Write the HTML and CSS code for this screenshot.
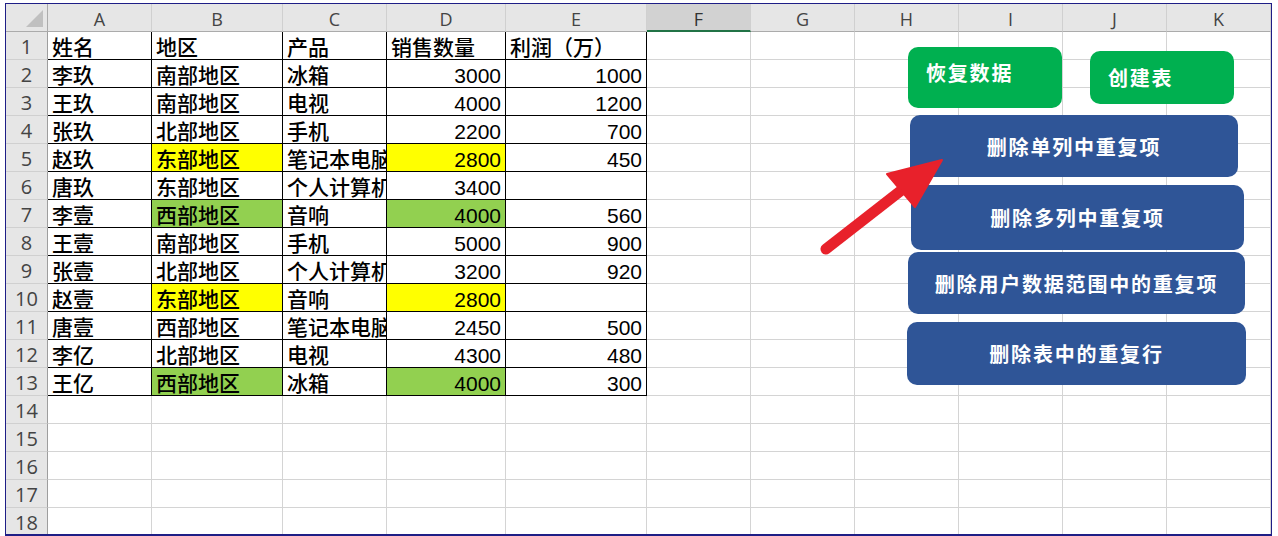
FILE: index.html
```html
<!DOCTYPE html>
<html lang="zh-CN">
<head>
<meta charset="utf-8">
<title>删除重复项</title>
<link rel="stylesheet" href="styles.css">
</head>
<body>
<div class="sheet">
  <div class="grid">
    <div class="corner"><span class="tri"></span></div>
    <div class="h">A</div><div class="h">B</div><div class="h">C</div><div class="h">D</div><div class="h">E</div><div class="h sel">F</div><div class="h">G</div><div class="h">H</div><div class="h">I</div><div class="h">J</div><div class="h">K</div>

    <div class="r">1</div><div class="c t">姓名</div><div class="c t">地区</div><div class="c t">产品</div><div class="c t">销售数量</div><div class="c t">利润（万）</div><div class="c"></div><div class="c"></div><div class="c"></div><div class="c"></div><div class="c"></div><div class="c"></div>
    <div class="r">2</div><div class="c t">李玖</div><div class="c t">南部地区</div><div class="c t">冰箱</div><div class="c t n">3000</div><div class="c t n">1000</div><div class="c"></div><div class="c"></div><div class="c"></div><div class="c"></div><div class="c"></div><div class="c"></div>
    <div class="r">3</div><div class="c t">王玖</div><div class="c t">南部地区</div><div class="c t">电视</div><div class="c t n">4000</div><div class="c t n">1200</div><div class="c"></div><div class="c"></div><div class="c"></div><div class="c"></div><div class="c"></div><div class="c"></div>
    <div class="r">4</div><div class="c t">张玖</div><div class="c t">北部地区</div><div class="c t">手机</div><div class="c t n">2200</div><div class="c t n">700</div><div class="c"></div><div class="c"></div><div class="c"></div><div class="c"></div><div class="c"></div><div class="c"></div>
    <div class="r">5</div><div class="c t">赵玖</div><div class="c t y">东部地区</div><div class="c t">笔记本电脑</div><div class="c t n y">2800</div><div class="c t n">450</div><div class="c"></div><div class="c"></div><div class="c"></div><div class="c"></div><div class="c"></div><div class="c"></div>
    <div class="r">6</div><div class="c t">唐玖</div><div class="c t">东部地区</div><div class="c t">个人计算机</div><div class="c t n">3400</div><div class="c t n"></div><div class="c"></div><div class="c"></div><div class="c"></div><div class="c"></div><div class="c"></div><div class="c"></div>
    <div class="r">7</div><div class="c t">李壹</div><div class="c t g">西部地区</div><div class="c t">音响</div><div class="c t n g">4000</div><div class="c t n">560</div><div class="c"></div><div class="c"></div><div class="c"></div><div class="c"></div><div class="c"></div><div class="c"></div>
    <div class="r">8</div><div class="c t">王壹</div><div class="c t">南部地区</div><div class="c t">手机</div><div class="c t n">5000</div><div class="c t n">900</div><div class="c"></div><div class="c"></div><div class="c"></div><div class="c"></div><div class="c"></div><div class="c"></div>
    <div class="r">9</div><div class="c t">张壹</div><div class="c t">北部地区</div><div class="c t">个人计算机</div><div class="c t n">3200</div><div class="c t n">920</div><div class="c"></div><div class="c"></div><div class="c"></div><div class="c"></div><div class="c"></div><div class="c"></div>
    <div class="r">10</div><div class="c t">赵壹</div><div class="c t y">东部地区</div><div class="c t">音响</div><div class="c t n y">2800</div><div class="c t n"></div><div class="c"></div><div class="c"></div><div class="c"></div><div class="c"></div><div class="c"></div><div class="c"></div>
    <div class="r">11</div><div class="c t">唐壹</div><div class="c t">西部地区</div><div class="c t">笔记本电脑</div><div class="c t n">2450</div><div class="c t n">500</div><div class="c"></div><div class="c"></div><div class="c"></div><div class="c"></div><div class="c"></div><div class="c"></div>
    <div class="r">12</div><div class="c t">李亿</div><div class="c t">北部地区</div><div class="c t">电视</div><div class="c t n">4300</div><div class="c t n">480</div><div class="c"></div><div class="c"></div><div class="c"></div><div class="c"></div><div class="c"></div><div class="c"></div>
    <div class="r">13</div><div class="c t">王亿</div><div class="c t g">西部地区</div><div class="c t">冰箱</div><div class="c t n g">4000</div><div class="c t n">300</div><div class="c"></div><div class="c"></div><div class="c"></div><div class="c"></div><div class="c"></div><div class="c"></div>
    <div class="r">14</div><div class="c"></div><div class="c"></div><div class="c"></div><div class="c"></div><div class="c"></div><div class="c"></div><div class="c"></div><div class="c"></div><div class="c"></div><div class="c"></div><div class="c"></div>
    <div class="r">15</div><div class="c"></div><div class="c"></div><div class="c"></div><div class="c"></div><div class="c"></div><div class="c"></div><div class="c"></div><div class="c"></div><div class="c"></div><div class="c"></div><div class="c"></div>
    <div class="r">16</div><div class="c"></div><div class="c"></div><div class="c"></div><div class="c"></div><div class="c"></div><div class="c"></div><div class="c"></div><div class="c"></div><div class="c"></div><div class="c"></div><div class="c"></div>
    <div class="r">17</div><div class="c"></div><div class="c"></div><div class="c"></div><div class="c"></div><div class="c"></div><div class="c"></div><div class="c"></div><div class="c"></div><div class="c"></div><div class="c"></div><div class="c"></div>
    <div class="r">18</div><div class="c"></div><div class="c"></div><div class="c"></div><div class="c"></div><div class="c"></div><div class="c"></div><div class="c"></div><div class="c"></div><div class="c"></div><div class="c"></div><div class="c"></div>
  </div>

  <div class="btn green restore">恢复数据</div>
  <div class="btn green create">创建表</div>
  <div class="btn blue b1">删除单列中重复项</div>
  <div class="btn blue b2">删除多列中重复项</div>
  <div class="btn blue b3">删除用户数据范围中的重复项</div>
  <div class="btn blue b4">删除表中的重复行</div>

  <svg class="arrow" width="1278" height="536" viewBox="0 0 1278 536">
    <line x1="826" y1="249" x2="903" y2="189" stroke="#e8212b" stroke-width="11" stroke-linecap="round"/>
    <polygon points="942,160 887,174 915,207" fill="#e8212b" stroke="#e8212b" stroke-width="2" stroke-linejoin="round"/>
  </svg>
</div>
</body>
</html>
```
FILE: styles.css
```css
html, body {
  margin: 0;
  padding: 0;
  background: #ffffff;
}

.sheet {
  position: relative;
  margin: 3px 0 0 5px;
  width: 1265px;
  height: 530px;
  border: 1px solid #1e1e86;
  border-bottom-width: 2px;
  overflow: hidden;
  font-family: "Liberation Sans", "Noto Sans CJK SC", sans-serif;
}

.grid {
  display: grid;
  grid-template-columns: 42px 104px 131px 104px 119px 141px 104px 104px 104px 104px 104px 104px;
  grid-auto-rows: 28px;
}

.grid > div {
  box-sizing: border-box;
  overflow: hidden;
  white-space: nowrap;
}

.corner {
  position: relative;
  background: #e6e6e6;
  border-right: 1px solid #ababab;
  border-bottom: 1px solid #ababab;
}

.tri {
  position: absolute;
  right: 4px;
  bottom: 4px;
  width: 0;
  height: 0;
  border-left: 17px solid transparent;
  border-bottom: 17px solid #c0c0c0;
}

.h {
  background: #e6e6e6;
  border-right: 1px solid #d0d0d0;
  border-bottom: 1px solid #ababab;
  text-align: center;
  font-family: "Open Sans", "Liberation Sans", sans-serif;
  font-size: 18px;
  line-height: 30px;
  color: #444444;
}

.h.sel {
  background: #d2d2d2;
  border-bottom: 2px solid #217346;
  color: #333333;
}

.r {
  background: #e6e6e6;
  border-right: 1px solid #9e9e9e;
  border-bottom: 1px solid #d0d0d0;
  text-align: center;
  font-family: "Open Sans", "Liberation Sans", sans-serif;
  font-size: 20px;
  line-height: 30px;
  color: #444444;
}

.c {
  border-right: 1px solid #d4d4d4;
  border-bottom: 1px solid #d4d4d4;
  font-size: 21px;
  font-weight: 500;
  line-height: 26px;
  padding: 3px 4px 0;
  color: #000000;
}

.c.t {
  border-right-color: #000000;
  border-bottom-color: #000000;
}

.c.n {
  text-align: right;
}

.c.y {
  background: #ffff00;
}

.c.g {
  background: #92d050;
}

.btn {
  position: absolute;
  box-sizing: border-box;
  border-radius: 10px;
  color: #ffffff;
  font-family: "Noto Sans CJK SC", sans-serif;
  font-weight: 700;
  font-size: 20px;
  letter-spacing: 1.8px;
  white-space: nowrap;
}

.green {
  background: #00b050;
}

.blue {
  background: #2f5597;
  display: flex;
  align-items: center;
  justify-content: center;
}

.restore {
  left: 902px;
  top: 43px;
  width: 154px;
  height: 61px;
  padding: 11px 0 0 18px;
}

.create {
  left: 1084px;
  top: 47px;
  width: 144px;
  height: 53px;
  padding: 0 0 0 18px;
  display: flex;
  align-items: center;
}

.b1 {
  left: 904px;
  top: 111px;
  width: 328px;
  height: 62px;
}

.b2 {
  left: 905px;
  top: 181px;
  width: 333px;
  height: 65px;
}

.b3 {
  left: 902px;
  top: 248px;
  width: 337px;
  height: 62px;
}

.b4 {
  left: 901px;
  top: 318px;
  width: 339px;
  height: 63px;
}

.arrow {
  position: absolute;
  left: -6px;
  top: -4px;
  pointer-events: none;
}
```
